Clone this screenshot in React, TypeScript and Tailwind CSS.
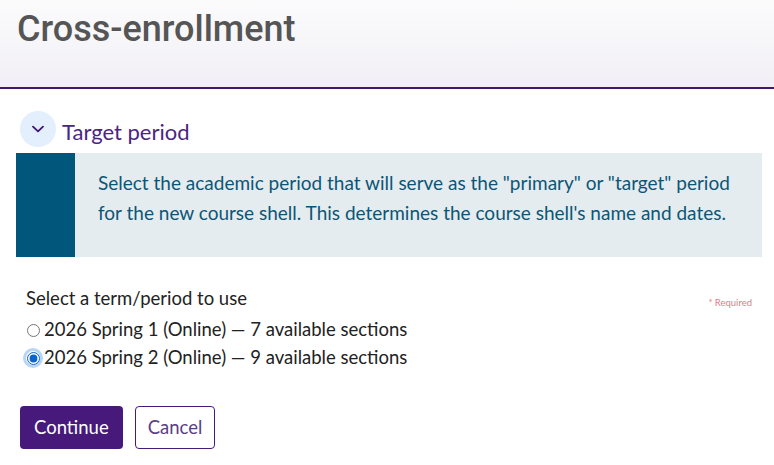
import React, { useState } from 'react';

const terms = [
  { id: 'spring1', label: '2026 Spring 1 (Online) — 7 available sections' },
  { id: 'spring2', label: '2026 Spring 2 (Online) — 9 available sections' },
];

export default function App() {
  const [selected, setSelected] = useState('spring2');

  return (
    <div className="min-h-[465px] bg-white font-['Lato',sans-serif] text-[#222]">
      {/* Page header */}
      <div className="h-[89px] border-b-2 border-[#3f1770] bg-gradient-to-b from-[#fbfbfc] to-[#f1eff5] px-[17px] pt-[6px]">
        <h1 className="font-['Roboto',sans-serif] text-[36px] font-medium leading-[46px] text-[#555]">
          Cross-enrollment
        </h1>
      </div>

      {/* Accordion section */}
      <div className="pl-[16px] pr-[12px] pt-[22px]">
        <div className="flex items-center gap-[6px] pl-[4px]">
          <button className="flex h-[36px] w-[36px] items-center justify-center rounded-full bg-[#e3effd] text-[#3f1770]">
            <svg width="16" height="16" viewBox="0 0 24 24" fill="none" stroke="currentColor" strokeWidth="2.8" strokeLinecap="round" strokeLinejoin="round">
              <path d="M4.5 8.5l7.5 7 7.5-7" />
            </svg>
          </button>
          <h2 className="pt-[6px] text-[22px] leading-[28px] text-[#4b2582]">Target period</h2>
        </div>

        <div className="mt-[6px] flex h-[104px] bg-[#e5ecf0]">
          <div className="w-[59px] shrink-0 bg-[#00567b]" />
          <p className="pl-[23px] pr-[4px] pt-[15px] text-[19px] leading-[30px] text-[#0b5675]">
            Select the academic period that will serve as the "primary" or "target" period
            for the new course shell. This determines the course shell's name and dates.
          </p>
        </div>
      </div>

      {/* Term selection */}
      <div className="pl-[26px] pr-[22px] pt-[28px]">
        <div className="flex items-center justify-between">
          <span className="text-[18.5px] leading-[26px]">Select a term/period to use</span>
          <span className="pt-[10px] text-[9.5px] text-[#e27b8c]">* Required</span>
        </div>
        <div className="mt-[5px] flex flex-col">
          {terms.map((t) => (
            <label key={t.id} className="flex h-[28px] items-center gap-[4px] text-[18.5px]">
              <span
                className={
                  selected === t.id
                    ? 'flex h-[14px] w-[14px] items-center justify-center rounded-full ring-[3px] ring-[#b9d5f5]'
                    : 'flex h-[14px] w-[14px] items-center justify-center'
                }
              >
                <input
                  type="radio"
                  name="term"
                  checked={selected === t.id}
                  onChange={() => setSelected(t.id)}
                  className="m-0 h-[13px] w-[13px] accent-[#0b63ce]"
                />
              </span>
              {t.label}
            </label>
          ))}
        </div>
      </div>

      {/* Actions */}
      <div className="flex gap-[12px] px-[20px] pt-[34px]">
        <button className="h-[43px] rounded-[4px] bg-[#46197a] px-[14px] text-[18.5px] text-white">Continue</button>
        <button className="h-[43px] rounded-[4px] border border-[#46197a] bg-white px-[12px] text-[18.5px] text-[#5a3d87]">Cancel</button>
      </div>
    </div>
  );
}
